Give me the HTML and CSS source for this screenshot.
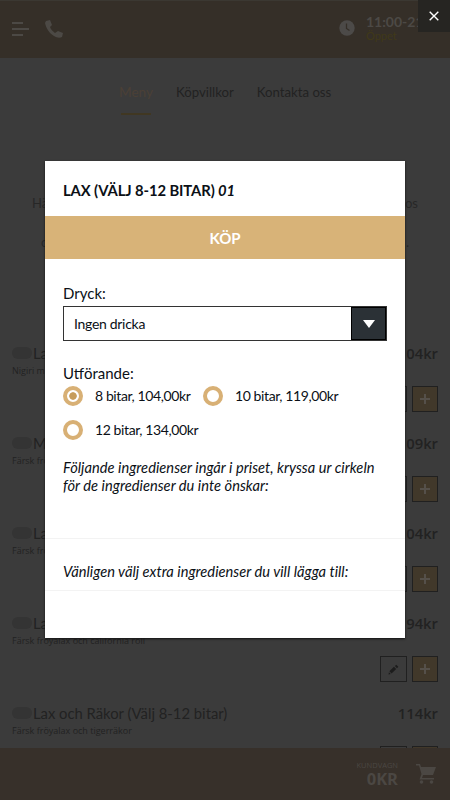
FILE: index.html
```
<!DOCTYPE html>
<html lang="sv">
<head>
<meta charset="utf-8">
<title>Meny</title>
<link rel="stylesheet" href="styles.css">
</head>
<body>
<div class="page">
  <header class="top">
    <svg class="burger" width="18" height="16" viewBox="0 0 18 16" fill="none" stroke="#4c4945" stroke-width="2"><path d="M0 2h11M0 8h17M0 14h11"/></svg>
    <svg class="phone" width="18" height="18" viewBox="0 0 18 18" fill="#4c4945"><path d="M1 1l4-1 2 5-2 2c1 3 3 4 5 6l3-2 5 2-1 4c-2 1-5 1-8-1C4 13 1 8 0 3z"/></svg>
    <svg class="clock" width="16" height="16" viewBox="0 0 16 16"><circle cx="8" cy="8" r="7.7" fill="#4c4a48"/><path d="M7.5 3.5v5l3 2" fill="none" stroke="#352f28" stroke-width="1.3"/></svg>
    <div class="hours"><b>11:00-21:30</b><span>Öppet</span></div>
  </header>
  <nav class="nav"><a class="active">Meny</a><a>Köpvillkor</a><a>Kontakta oss</a></nav>
  <div class="intro"><p><span>Hä</span><span>os</span></p><p class="second"><span>o</span><span>.</span></p></div>
  <main>
    <article class="item"><div class="line"><i class="tag"></i><span class="name">La</span><b>104kr</b></div><p>Nigiri m</p><div class="actions"><span class="edit"></span><span class="add"></span></div></article>
    <article class="item"><div class="line"><i class="tag"></i><span class="name">M</span><b>109kr</b></div><p>Färsk frö</p><div class="actions"><span class="edit"></span><span class="add"></span></div></article>
    <article class="item"><div class="line"><i class="tag"></i><span class="name">La</span><b>104kr</b></div><p>Färsk frö</p><div class="actions"><span class="edit"></span><span class="add"></span></div></article>
    <article class="item"><div class="line"><i class="tag"></i><span class="name">La</span><b>94kr</b></div><p>Färsk fröyalax och california roll</p><div class="actions"><span class="edit"><svg width="11" height="11" viewBox="0 0 12 12" fill="#1c1c1c"><path d="M1.5 8l5-5 2.4 2.4-5 5zM7.5 2.2L9 .8l2.3 2.3L9.8 4.6zM1 9l2 2-2.4.5z"/></svg></span><span class="add"></span></div></article>
    <article class="item"><div class="line"><i class="tag"></i><span class="name">Lax och Räkor (Välj 8-12 bitar)</span><b>114kr</b></div><p>Färsk fröyalax och tigerräkor</p><div class="actions"><span class="edit"></span><span class="add"></span></div></article>
  </main>
  <footer class="cart">
    <div class="sum"><span>KUNDVAGN</span><b>0KR</b></div>
    <svg width="20" height="20" viewBox="0 0 20 20" fill="#4b4743"><path d="M0 0h4l1 3h15l-3 8H7l-1 3h12v1.5H3.5L5.5 10 3 1.5H0z"/><circle cx="5.5" cy="18" r="1.8"/><circle cx="15.5" cy="18" r="1.8"/></svg>
  </footer>
</div>

<div class="overlay">
  <section class="dialog">
    <h1>LAX (VÄLJ 8-12 BITAR) <em>01</em></h1>
    <div class="buy">KÖP</div>
    <div class="form">
      <div class="label">Dryck:</div>
      <div class="select"><span>Ingen dricka</span><i><svg width="12" height="8" viewBox="0 0 12 8" fill="#fff"><path d="M0 0h12L6 8z"/></svg></i></div>
      <div class="label second-label">Utförande:</div>
      <div class="options">
        <label><i class="radio on"></i><span>8 bitar, 104,00kr</span></label>
        <label><i class="radio"></i><span>10 bitar, 119,00kr</span></label>
        <label><i class="radio"></i><span>12 bitar, 134,00kr</span></label>
      </div>
      <p class="note">Följande ingredienser ingår i priset, kryssa ur cirkeln<br>för de ingredienser du inte önskar:</p>
    </div>
    <p class="note extra">Vänligen välj extra ingredienser du vill lägga till:</p>
  </section>
  <div class="close"><svg width="10" height="10" viewBox="0 0 10 10" fill="none" stroke="#fff" stroke-width="1.4"><path d="M.7.7l8.6 8.6M9.3.7L.7 9.3"/></svg></div>
</div>
</body>
</html>
```
FILE: styles.css
```
* { box-sizing: border-box; }
body { margin: 0; font-family: Lato, sans-serif; color: #222; background: #3b3b3b; }
p, h1 { margin: 0; }
.page { height: 800px; display: flex; flex-direction: column; overflow: hidden; border-top: 1px solid #3b3832; }
.top { height: 57px; flex: none; background: #352f28; display: flex; align-items: flex-start; padding: 20px 0 0 12px; }
.phone { margin: -1px 0 0 15px; }
.clock { margin: -1px 0 0 276px; }
.hours { margin: -8px 0 0 11px; display: flex; flex-direction: column; white-space: nowrap; color: #4c4945; font-size: 14px; line-height: 17px; }
.hours span { font-size: 11px; line-height: 11px; color: #403919; }
.nav { height: 58px; flex: none; display: flex; padding: 26px 0 0 119px; gap: 23px; font-size: 13.2px; line-height: 17px; }
.nav .active { color: #4b4036; display: flex; flex-direction: column; height: 31px; font-size: 13.6px; }
.nav .active::after { content: ""; height: 2px; width: 30px; margin: auto auto 0; background: #403722; flex: none; }
.intro { height: 229px; flex: none; padding: 78px 32px 0; font-size: 13px; line-height: 18px; }
.intro p { display: flex; justify-content: space-between; color: #272727; }
.intro .second { margin-top: 21px; padding: 0 9px; }
main { flex: 1; min-height: 0; overflow: hidden; }
.item { height: 90px; padding: 0 12px; }
.line { display: flex; align-items: center; height: 16px; font-size: 14.8px; }
.line b { margin-left: auto; font: 600 14.8px "Open Sans", sans-serif; }
.tag { width: 20px; height: 12px; border-radius: 6px; background: #343434; margin-right: 1px; }
.item p { font: 9px/14px "Open Sans", sans-serif; margin-top: 3px; height: 14px; }
.actions { display: flex; justify-content: flex-end; gap: 5px; margin-top: 8px; }
.edit, .add { width: 27px; height: 26px; border: 1px solid #202020; display: flex; align-items: center; justify-content: center; }
.add { width: 26px; background: #41382a; }
.add::before { content: ""; width: 10px; height: 10px; background: linear-gradient(#55504a, #55504a) center / 2px 10px no-repeat, linear-gradient(#55504a, #55504a) center / 10px 2px no-repeat; }
.cart { height: 52px; flex: none; background: #37302a; display: flex; align-items: center; justify-content: flex-end; padding: 0 14px 0 0; gap: 18px; color: #4b4743; }
.sum { display: flex; flex-direction: column; align-items: flex-end; }
.sum span { font: 7.5px/10px "Open Sans", sans-serif; }
.sum b { font: 700 16.5px/18px "Open Sans", sans-serif; }
.overlay { position: absolute; top: 0; left: 0; width: 450px; height: 800px; display: flex; align-items: center; justify-content: center; }
.close { position: absolute; top: 0; right: 0; width: 32px; height: 32px; background: #262522; display: flex; align-items: center; justify-content: center; }
.dialog { width: 360px; height: 477px; margin-bottom: 1px; background: #fff; color: #0b1016; box-shadow: 0 1px 2px #111; }
h1 { height: 55px; padding: 2px 18px 0; font-size: 14.8px; line-height: 55px; font-weight: 700; letter-spacing: -.1px; }
.buy { height: 43px; background: #d8b378; color: #fff; font-weight: 700; font-size: 15px; line-height: 44px; text-align: center; }
.form { height: 280px; border-bottom: 1px solid #f3f3f3; padding: 24px 18px 0; }
.label { font-size: 15px; line-height: 20px; }
.select { height: 35px; margin-top: 3px; border: 1px solid #333; display: flex; align-items: center; justify-content: space-between; padding-left: 10px; font-size: 14px; letter-spacing: -.3px; }
.select i { width: 35px; height: 33px; background: #2b3136; border: 1px solid #000; display: flex; align-items: center; justify-content: center; }
.second-label { margin-top: 22px; }
.options { display: grid; grid-template-columns: 140px 1fr; row-gap: 14px; margin-top: 3px; font-size: 14px; letter-spacing: -.4px; white-space: nowrap; }
.options label { display: flex; align-items: center; height: 20px; gap: 12px; }
.options span { margin-top: -2px; }
.radio { width: 20px; height: 20px; flex: none; border-radius: 50%; border: 4.5px solid #d8b075; }
.radio.on { background: radial-gradient(circle, #c79d5c 3.4px, #fff 4.1px); background-origin: border-box; }
.note { font-size: 14.65px; line-height: 17.5px; font-style: italic; white-space: nowrap; letter-spacing: .03px; }
.form .note { margin-top: 19px; }
.extra { height: 52px; line-height: 65px; padding-left: 18px; border-bottom: 1px solid #f3f3f3; }
```
